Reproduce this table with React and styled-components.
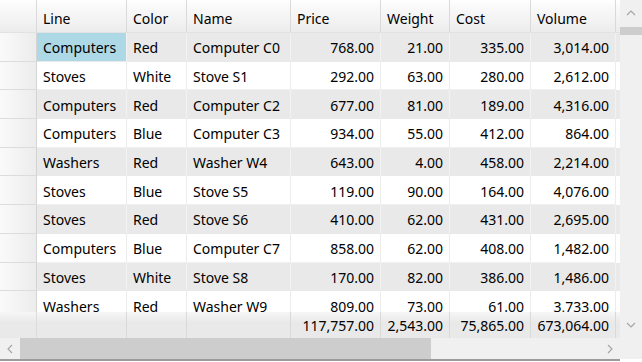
import React from "react";
import styled, { createGlobalStyle } from "styled-components";

const GlobalStyle = createGlobalStyle`
  html, body {
    margin: 0;
    padding: 0;
    background: #ffffff;
  }
  body {
    font-family: "Segoe UI", "Noto Sans", sans-serif;
    font-size: 14px;
    color: #000000;
  }
`;

const columns = [
  { key: "line", title: "Line", width: 90 },
  { key: "color", title: "Color", width: 60 },
  { key: "name", title: "Name", width: 104 },
  { key: "price", title: "Price", width: 90, numeric: true },
  { key: "weight", title: "Weight", width: 69, numeric: true },
  { key: "cost", title: "Cost", width: 81, numeric: true },
  { key: "volume", title: "Volume", width: 85, numeric: true },
];

const rows = [
  ["Computers", "Red", "Computer C0", "768.00", "21.00", "335.00", "3,014.00"],
  ["Stoves", "White", "Stove S1", "292.00", "63.00", "280.00", "2,612.00"],
  ["Computers", "Red", "Computer C2", "677.00", "81.00", "189.00", "4,316.00"],
  ["Computers", "Blue", "Computer C3", "934.00", "55.00", "412.00", "864.00"],
  ["Washers", "Red", "Washer W4", "643.00", "4.00", "458.00", "2,214.00"],
  ["Stoves", "Blue", "Stove S5", "119.00", "90.00", "164.00", "4,076.00"],
  ["Stoves", "Red", "Stove S6", "410.00", "62.00", "431.00", "2,695.00"],
  ["Computers", "Blue", "Computer C7", "858.00", "62.00", "408.00", "1,482.00"],
  ["Stoves", "White", "Stove S8", "170.00", "82.00", "386.00", "1,486.00"],
  ["Washers", "Red", "Washer W9", "809.00", "73.00", "61.00", "3,733.00"],
];

const totals = ["", "", "", "117,757.00", "2,543.00", "75,865.00", "673,064.00"];

const template = `37px ${columns.map((c) => c.width + "px").join(" ")} 4px`;

const Frame = styled.div`
  width: 642px;
  height: 362px;
  display: flex;
  flex-direction: column;
  overflow: hidden;
`;

const Main = styled.div`
  display: flex;
  height: 338px;
`;

const GridArea = styled.div`
  width: 620px;
  display: flex;
  flex-direction: column;
`;

const HeaderRow = styled.div`
  display: grid;
  grid-template-columns: ${template};
  height: 33px;
`;

const HeaderCell = styled.div`
  box-sizing: border-box;
  display: flex;
  align-items: center;
  padding: 5px 6px 0 6px;
  background: linear-gradient(#ffffff 0%, #fbfbfb 15%, #ececec 100%);
  border-right: 1px solid ${(p) => (p.$last ? "transparent" : "#dadada")};
  border-bottom: 1px solid #e2e2e2;
  white-space: nowrap;
`;

const BodyViewport = styled.div`
  height: 279px;
  overflow: hidden;
`;

const DataRow = styled.div`
  display: grid;
  grid-template-columns: ${template};
  height: 28.7px;
  background: ${(p) => (p.$alt ? "#e9e9e9" : "#ffffff")};
`;

const RowHeader = styled.div`
  box-sizing: border-box;
  background: linear-gradient(90deg, #fafafa, #ececec);
  border-right: 1px solid #d4d4d4;
  border-bottom: 1px solid #dcdcdc;
`;

const Cell = styled.div`
  box-sizing: border-box;
  display: flex;
  align-items: center;
  justify-content: ${(p) => (p.$numeric ? "flex-end" : "flex-start")};
  padding: 2px 6px 0 6px;
  white-space: nowrap;
  overflow: hidden;
  background: ${(p) => (p.$selected ? "#add8e6" : "transparent")};
  border-right: 1px solid ${(p) => (p.$alt ? "#f2f2f2" : "#ececec")};
  border-bottom: 1px solid ${(p) => (p.$alt ? "#e9e9e9" : "#f0f0f0")};
`;

const Filler = styled.div``;

const TotalsRow = styled.div`
  display: grid;
  grid-template-columns: ${template};
  height: 26px;
  background: linear-gradient(#f6f6f6, #e9e9e9 40%, #e9e9e9);
`;

const TotalCell = styled.div`
  box-sizing: border-box;
  display: flex;
  align-items: center;
  justify-content: flex-end;
  padding: 1px 6px 0 4px;
  white-space: nowrap;
  border-right: 1px solid ${(p) => (p.$head ? "#dcdcdc" : "#d9d9d9")};
`;

const VScroll = styled.div`
  width: 22px;
  display: flex;
  flex-direction: column;
  background: #f0f0f0;
`;

const ArrowBox = styled.div`
  display: flex;
  align-items: center;
  justify-content: center;
  width: ${(p) => p.$w || 22}px;
  height: ${(p) => p.$h || 21}px;
  flex-shrink: 0;
`;

const VThumb = styled.div`
  height: 8px;
  margin-top: 1px;
  background: #cdcdcd;
`;

const Spacer = styled.div`
  flex: 1;
`;

const HScroll = styled.div`
  display: flex;
  height: 21px;
  background: #f0f0f0;
`;

const HThumb = styled.div`
  width: 411px;
  background: #cdcdcd;
`;

const Corner = styled.div`
  width: 22px;
  background: #f0f0f0;
`;

const BottomLine = styled.div`
  height: 2px;
  background: #9c9c9c;
  width: 620px;
`;

function Chevron({ dir }) {
  const pts = {
    up: "1,5 5,1 9,5",
    down: "1,1 5,5 9,1",
    left: "5,1 1,5 5,9",
    right: "1,1 5,5 1,9",
  }[dir];
  const vertical = dir === "up" || dir === "down";
  return (
    <svg
      width={vertical ? 10 : 6}
      height={vertical ? 6 : 10}
      viewBox={vertical ? "0 0 10 6" : "0 0 6 10"}
    >
      <polyline points={pts} fill="none" stroke="#a3a3a3" strokeWidth="1.1" />
    </svg>
  );
}

export default function App() {
  return (
    <Frame>
      <GlobalStyle />
      <Main>
        <GridArea>
          <HeaderRow>
            <HeaderCell />
            {columns.map((c) => (
              <HeaderCell key={c.key}>{c.title}</HeaderCell>
            ))}
            <HeaderCell $last />
          </HeaderRow>
          <BodyViewport>
            {rows.map((r, i) => {
              const alt = i % 2 === 0;
              return (
                <DataRow key={i} $alt={alt}>
                  <RowHeader />
                  {r.map((v, j) => (
                    <Cell
                      key={j}
                      $alt={alt}
                      $numeric={columns[j].numeric}
                      $selected={i === 0 && j === 0}
                    >
                      {v}
                    </Cell>
                  ))}
                  <Filler />
                </DataRow>
              );
            })}
          </BodyViewport>
          <TotalsRow>
            <TotalCell $head />
            {totals.map((t, j) => (
              <TotalCell key={j}>{t}</TotalCell>
            ))}
            <Filler />
          </TotalsRow>
        </GridArea>
        <VScroll>
          <ArrowBox $h={26}>
            <Chevron dir="up" />
          </ArrowBox>
          <VThumb />
          <Spacer />
          <ArrowBox $h={26}>
            <Chevron dir="down" />
          </ArrowBox>
        </VScroll>
      </Main>
      <HScroll>
        <ArrowBox $w={20}>
          <Chevron dir="left" />
        </ArrowBox>
        <HThumb />
        <Spacer />
        <ArrowBox $w={20}>
          <Chevron dir="right" />
        </ArrowBox>
        <Corner />
      </HScroll>
      <BottomLine />
    </Frame>
  );
}
